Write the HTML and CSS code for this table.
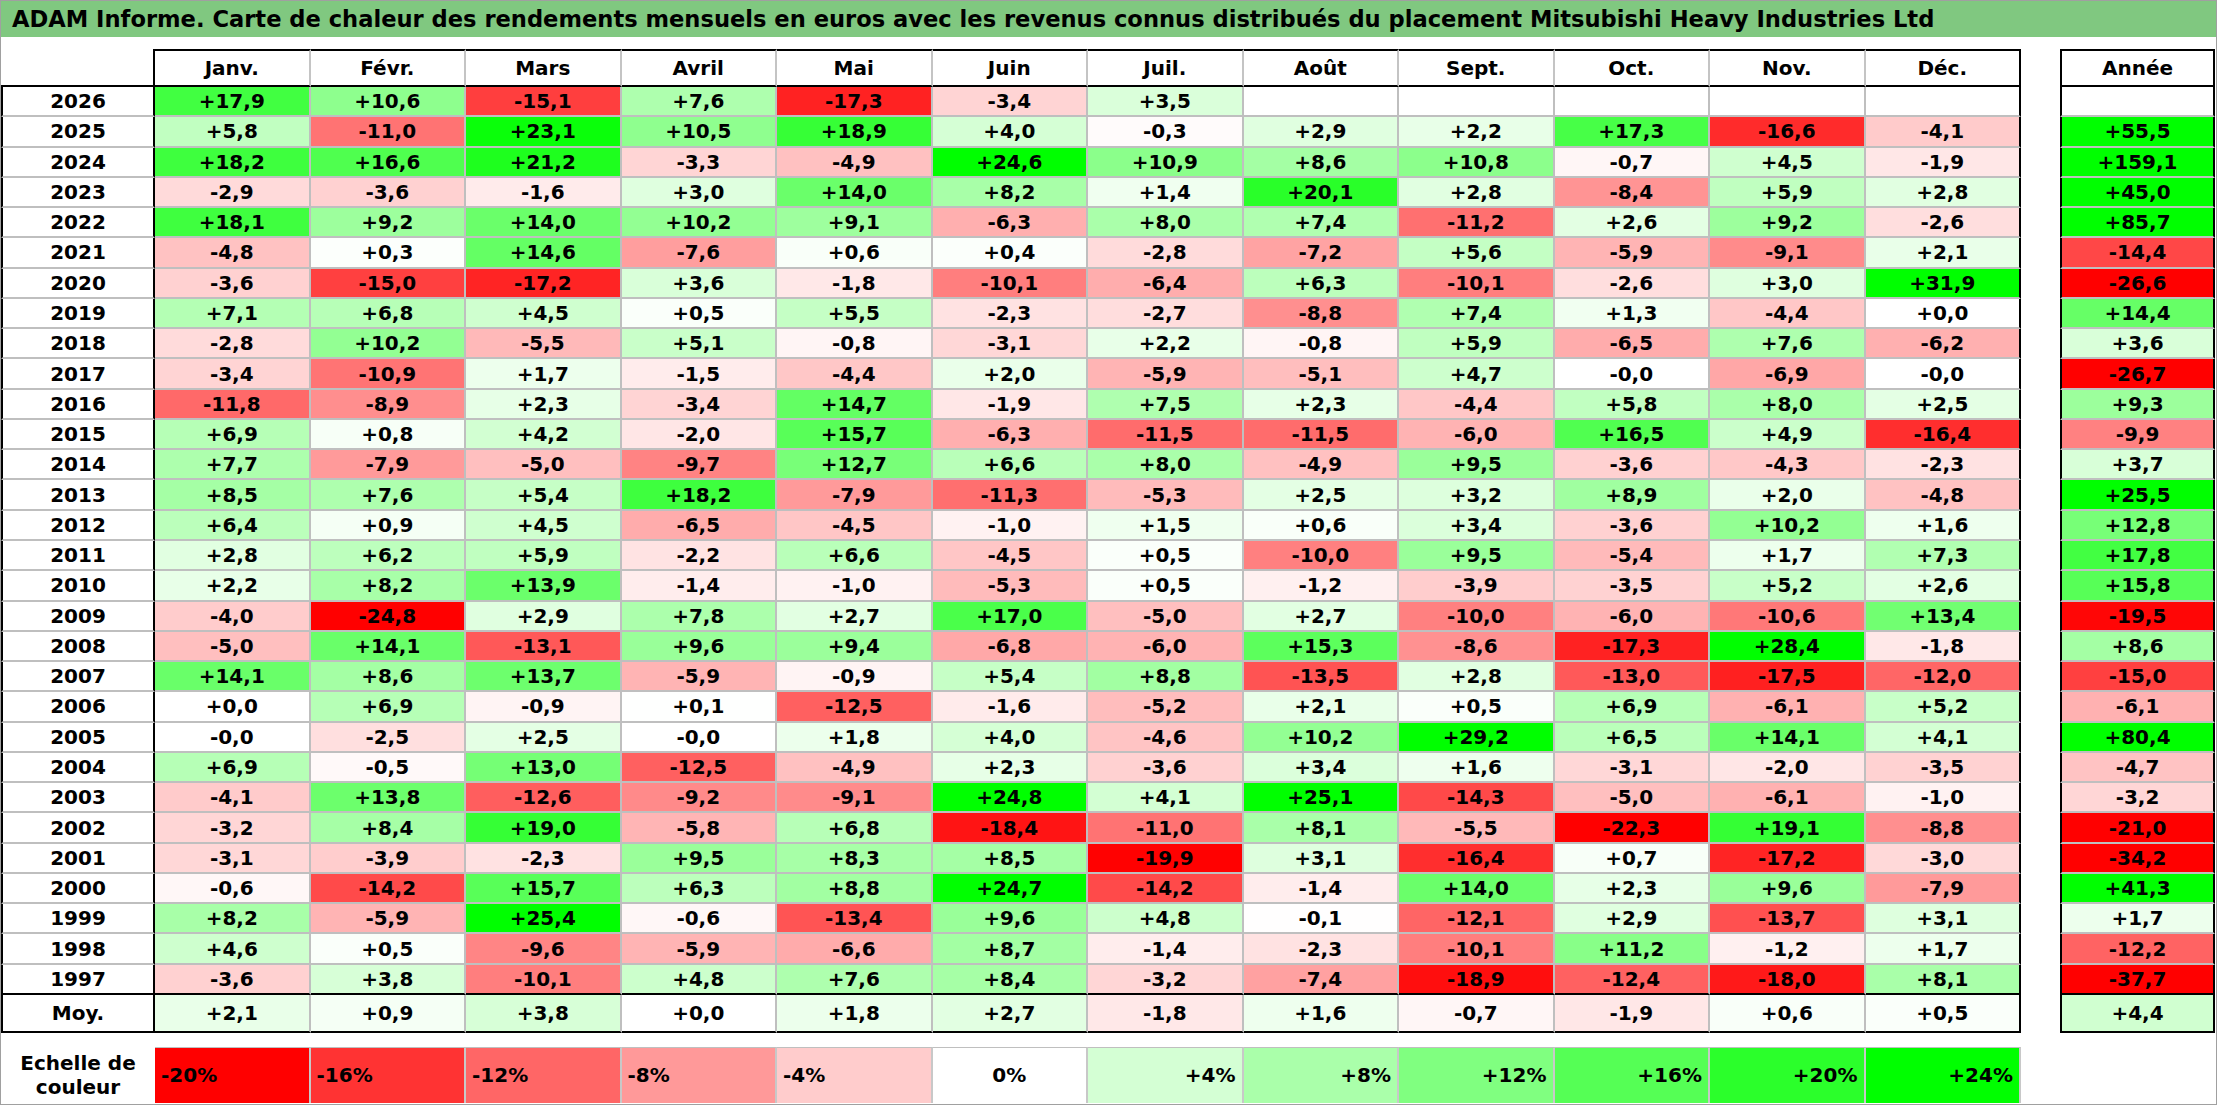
FILE: index.html
```html
<!DOCTYPE html>
<html lang="fr">
<head>
<meta charset="utf-8">
<title>ADAM Informe - Mitsubishi Heavy Industries Ltd</title>
<link rel="stylesheet" href="styles.css">
</head>
<body>
<div class="frame">
  <div class="title">ADAM Informe. Carte de chaleur des rendements mensuels en euros avec les revenus connus distribués du placement Mitsubishi Heavy Industries Ltd</div>
  <div class="content">
    <div class="heatmap" id="heatmap">
      <div class="hcorner"></div>
      <div class="hm">Janv.</div>
      <div class="hm">Févr.</div>
      <div class="hm">Mars</div>
      <div class="hm">Avril</div>
      <div class="hm">Mai</div>
      <div class="hm">Juin</div>
      <div class="hm">Juil.</div>
      <div class="hm">Août</div>
      <div class="hm">Sept.</div>
      <div class="hm">Oct.</div>
      <div class="hm">Nov.</div>
      <div class="hm dec">Déc.</div>
      <div class="gap"></div>
      <div class="hy">Année</div>
    </div>
    <div class="legend">
      <div class="lg-label">Echelle de<br>couleur</div>
      <div class="lg neg s-20">-20%</div>
      <div class="lg neg s-16">-16%</div>
      <div class="lg neg s-12">-12%</div>
      <div class="lg neg s-8">-8%</div>
      <div class="lg neg s-4">-4%</div>
      <div class="lg zero">0%</div>
      <div class="lg pos s4">+4%</div>
      <div class="lg pos s8">+8%</div>
      <div class="lg pos s12">+12%</div>
      <div class="lg pos s16">+16%</div>
      <div class="lg pos s20">+20%</div>
      <div class="lg pos s24">+24%</div>
    </div>
  </div>
</div>
<script src="script.js"></script>
</body>
</html>
```
FILE: styles.css
```css
* { box-sizing: border-box; }
html, body { margin: 0; padding: 0; background: #fff; }
body {
  font-family: "DejaVu Sans", "Liberation Sans", sans-serif;
  font-weight: bold;
  color: #000;
}
.frame {
  width: 2217px;
  height: 1105px;
  border: 1px solid #a0a0a0;
  display: flex;
  flex-direction: column;
  overflow: hidden;
}
.title {
  flex: none;
  height: 36px;
  line-height: 36px;
  background: #80c880;
  font-size: 22.6px;
  padding-left: 11px;
  white-space: nowrap;
}
.content {
  padding-top: 12px;
  display: flex;
  flex-direction: column;
  gap: 14px;
}
.heatmap {
  display: grid;
  grid-template-columns: 154px repeat(12, 155.5px) 39px 155px;
  grid-template-rows: 38px repeat(30, 30.267px) 38px;
  font-size: 20px;
}
.heatmap > div {
  display: flex;
  align-items: center;
  justify-content: center;
  white-space: nowrap;
}
.hcorner {
  border-right: 2px solid #000;
  border-bottom: 2px solid #000;
}
.hm {
  border-top: 2px solid #000;
  border-bottom: 2px solid #000;
  border-right: 2px solid #c4c4c4;
}
.hm.dec { border-right: 2px solid #000; }
.hy { border: 2px solid #000; }
.lbl {
  border-left: 2px solid #000;
  border-right: 2px solid #000;
  border-bottom: 2px solid #bfbfbf;
}
.c {
  border-right: 2px solid #bfbfbf;
  border-bottom: 2px solid #bfbfbf;
}
.c.dec { border-right: 2px solid #000; }
.yr {
  border-left: 2px solid #000;
  border-right: 2px solid #000;
  border-bottom: 2px solid #bfbfbf;
}
.lbl.end, .c.end, .yr.end { border-bottom: 2px solid #000; }

.legend {
  display: grid;
  grid-template-columns: 154px repeat(12, 155.5px);
  height: 56px;
  font-size: 20px;
}
.lg-label {
  display: flex;
  align-items: center;
  justify-content: center;
  text-align: center;
  line-height: 24px;
}
.lg {
  display: flex;
  align-items: center;
  padding: 0 6px;
  border-top: 1px solid #bfbfbf;
  border-right: 2px solid #c8c8c8;
}
.lg.neg { justify-content: flex-start; }
.lg.zero { justify-content: center; }
.lg.pos { justify-content: flex-end; }
.s-20 { background: #ff0000; }
.s-16 { background: #ff3333; }
.s-12 { background: #ff6666; }
.s-8 { background: #ff9999; }
.s-4 { background: #ffcccc; }
.zero { background: #ffffff; }
.s4 { background: #d4ffd4; }
.s8 { background: #aaffaa; }
.s12 { background: #80ff80; }
.s16 { background: #55ff55; }
.s20 { background: #2bff2b; }
.s24 { background: #00ff00; }
```
FILE: script.js
```js
(function () {
  var raw = [
    "2026 +17,9 +10,6 -15,1 +7,6 -17,3 -3,4 +3,5 . . . . . .",
    "2025 +5,8 -11,0 +23,1 +10,5 +18,9 +4,0 -0,3 +2,9 +2,2 +17,3 -16,6 -4,1 +55,5",
    "2024 +18,2 +16,6 +21,2 -3,3 -4,9 +24,6 +10,9 +8,6 +10,8 -0,7 +4,5 -1,9 +159,1",
    "2023 -2,9 -3,6 -1,6 +3,0 +14,0 +8,2 +1,4 +20,1 +2,8 -8,4 +5,9 +2,8 +45,0",
    "2022 +18,1 +9,2 +14,0 +10,2 +9,1 -6,3 +8,0 +7,4 -11,2 +2,6 +9,2 -2,6 +85,7",
    "2021 -4,8 +0,3 +14,6 -7,6 +0,6 +0,4 -2,8 -7,2 +5,6 -5,9 -9,1 +2,1 -14,4",
    "2020 -3,6 -15,0 -17,2 +3,6 -1,8 -10,1 -6,4 +6,3 -10,1 -2,6 +3,0 +31,9 -26,6",
    "2019 +7,1 +6,8 +4,5 +0,5 +5,5 -2,3 -2,7 -8,8 +7,4 +1,3 -4,4 +0,0 +14,4",
    "2018 -2,8 +10,2 -5,5 +5,1 -0,8 -3,1 +2,2 -0,8 +5,9 -6,5 +7,6 -6,2 +3,6",
    "2017 -3,4 -10,9 +1,7 -1,5 -4,4 +2,0 -5,9 -5,1 +4,7 -0,0 -6,9 -0,0 -26,7",
    "2016 -11,8 -8,9 +2,3 -3,4 +14,7 -1,9 +7,5 +2,3 -4,4 +5,8 +8,0 +2,5 +9,3",
    "2015 +6,9 +0,8 +4,2 -2,0 +15,7 -6,3 -11,5 -11,5 -6,0 +16,5 +4,9 -16,4 -9,9",
    "2014 +7,7 -7,9 -5,0 -9,7 +12,7 +6,6 +8,0 -4,9 +9,5 -3,6 -4,3 -2,3 +3,7",
    "2013 +8,5 +7,6 +5,4 +18,2 -7,9 -11,3 -5,3 +2,5 +3,2 +8,9 +2,0 -4,8 +25,5",
    "2012 +6,4 +0,9 +4,5 -6,5 -4,5 -1,0 +1,5 +0,6 +3,4 -3,6 +10,2 +1,6 +12,8",
    "2011 +2,8 +6,2 +5,9 -2,2 +6,6 -4,5 +0,5 -10,0 +9,5 -5,4 +1,7 +7,3 +17,8",
    "2010 +2,2 +8,2 +13,9 -1,4 -1,0 -5,3 +0,5 -1,2 -3,9 -3,5 +5,2 +2,6 +15,8",
    "2009 -4,0 -24,8 +2,9 +7,8 +2,7 +17,0 -5,0 +2,7 -10,0 -6,0 -10,6 +13,4 -19,5",
    "2008 -5,0 +14,1 -13,1 +9,6 +9,4 -6,8 -6,0 +15,3 -8,6 -17,3 +28,4 -1,8 +8,6",
    "2007 +14,1 +8,6 +13,7 -5,9 -0,9 +5,4 +8,8 -13,5 +2,8 -13,0 -17,5 -12,0 -15,0",
    "2006 +0,0 +6,9 -0,9 +0,1 -12,5 -1,6 -5,2 +2,1 +0,5 +6,9 -6,1 +5,2 -6,1",
    "2005 -0,0 -2,5 +2,5 -0,0 +1,8 +4,0 -4,6 +10,2 +29,2 +6,5 +14,1 +4,1 +80,4",
    "2004 +6,9 -0,5 +13,0 -12,5 -4,9 +2,3 -3,6 +3,4 +1,6 -3,1 -2,0 -3,5 -4,7",
    "2003 -4,1 +13,8 -12,6 -9,2 -9,1 +24,8 +4,1 +25,1 -14,3 -5,0 -6,1 -1,0 -3,2",
    "2002 -3,2 +8,4 +19,0 -5,8 +6,8 -18,4 -11,0 +8,1 -5,5 -22,3 +19,1 -8,8 -21,0",
    "2001 -3,1 -3,9 -2,3 +9,5 +8,3 +8,5 -19,9 +3,1 -16,4 +0,7 -17,2 -3,0 -34,2",
    "2000 -0,6 -14,2 +15,7 +6,3 +8,8 +24,7 -14,2 -1,4 +14,0 +2,3 +9,6 -7,9 +41,3",
    "1999 +8,2 -5,9 +25,4 -0,6 -13,4 +9,6 +4,8 -0,1 -12,1 +2,9 -13,7 +3,1 +1,7",
    "1998 +4,6 +0,5 -9,6 -5,9 -6,6 +8,7 -1,4 -2,3 -10,1 +11,2 -1,2 +1,7 -12,2",
    "1997 -3,6 +3,8 -10,1 +4,8 +7,6 +8,4 -3,2 -7,4 -18,9 -12,4 -18,0 +8,1 -37,7",
    "Moy. +2,1 +0,9 +3,8 +0,0 +1,8 +2,7 -1,8 +1,6 -0,7 -1,9 +0,6 +0,5 +4,4"
  ];

  var grid = document.getElementById("heatmap");

  function bg(s) {
    if (s === ".") return "";
    var v = parseFloat(s.replace(",", "."));
    var t, c;
    if (v > 0) {
      t = Math.min(v / 24, 1);
      c = Math.round(255 * (1 - t));
      return "rgb(" + c + ",255," + c + ")";
    }
    if (v < 0) {
      t = Math.min(-v / 20, 1);
      c = Math.round(255 * (1 - t));
      return "rgb(255," + c + "," + c + ")";
    }
    return "#ffffff";
  }

  function cell(text, cls, color) {
    var d = document.createElement("div");
    d.className = cls;
    if (text && text !== ".") d.textContent = text;
    if (color) d.style.background = color;
    grid.appendChild(d);
  }

  raw.forEach(function (line, i) {
    var p = line.split(" ");
    var end = i >= raw.length - 2 ? " end" : "";
    cell(p[0], "lbl" + end, "");
    for (var m = 1; m <= 12; m++) {
      cell(p[m], "c" + (m === 12 ? " dec" : "") + end, bg(p[m]));
    }
    cell("", "gap", "");
    cell(p[13], "yr" + end, bg(p[13]));
  });
})();
```
